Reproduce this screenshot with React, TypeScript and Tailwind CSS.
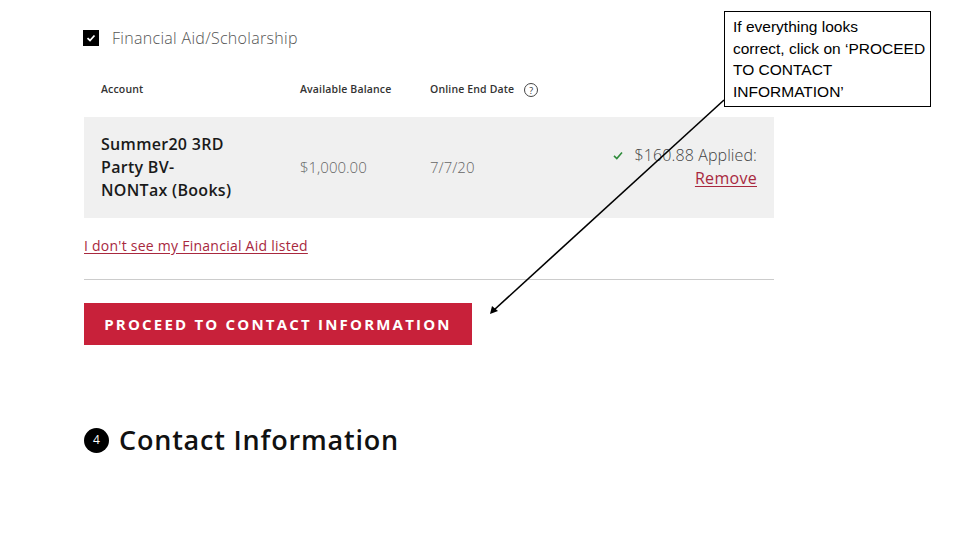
import React from "react";

export default function App() {
  const font = { fontFamily: '"Open Sans", "DejaVu Sans", sans-serif' };
  return (
    <div className="relative w-[960px] h-[540px] bg-white overflow-hidden" style={font}>
      <div className="pl-[83px] pt-[30px] w-[774px]">
        {/* checkbox row */}
        <div className="flex items-center h-[16px] gap-[13px]">
          <div className="w-[16px] h-[16px] bg-black flex items-center justify-center">
            <svg width="10" height="10" viewBox="0 0 10 10">
              <path d="M1.5 5.2 L4 7.5 L8.5 2.5" stroke="white" strokeWidth="1.8" fill="none" />
            </svg>
          </div>
          <span className="text-[16px] text-[#555] font-light tracking-[0.3px]">Financial Aid/Scholarship</span>
        </div>

        {/* header row */}
        <div className="flex items-center h-[20px] mt-[34px] pl-[18px] text-[10.5px] font-semibold text-[#333] tracking-[0.15px]">
          <div className="w-[199px]">Account</div>
          <div className="w-[130px]">Available Balance</div>
          <div className="flex items-center gap-[10px]">
            <span>Online End Date</span>
            <span className="w-[14px] h-[14px] rounded-full border border-[#444] flex items-center justify-center text-[9px] font-normal leading-none">?</span>
          </div>
        </div>

        {/* gray row */}
        <div className="flex items-center h-[101px] mt-[17px] ml-[1px] pl-[17px] pr-[17px] bg-[#f0f0f0]">
          <div className="w-[199px] text-[16px] font-semibold text-[#1a1a1a] leading-[23px] tracking-[0.3px]">
            Summer20 3RD
            <br />
            Party BV-
            <br />
            NONTax (Books)
          </div>
          <div className="w-[130px] text-[15px] font-light text-[#666]">$1,000.00</div>
          <div className="w-[100px] text-[15px] font-light text-[#666]">7/7/20</div>
          <div className="flex-1 flex flex-col items-end text-[16px] font-light leading-[23px] -mt-[1px] tracking-[0.1px]">
            <div className="flex items-center gap-[12px] text-[#444]">
              <svg width="10" height="9" viewBox="0 0 10 9">
                <path d="M1 4.8 L3.8 7.5 L9 1.5" stroke="#2e8b3a" strokeWidth="1.6" fill="none" />
              </svg>
              <span>$160.88 Applied:</span>
            </div>
            <a className="text-[#a8283e] font-normal underline underline-offset-2 tracking-[0.3px]">Remove</a>
          </div>
        </div>

        {/* link */}
        <div className="h-[20px] mt-[17px] ml-[1px] flex items-center">
          <a className="text-[14px] text-[#a8283e] underline underline-offset-2 tracking-[0.25px]">I don't see my Financial Aid listed</a>
        </div>

        {/* divider */}
        <div className="h-px bg-[#cccccc] mt-[24px] ml-[1px]" />

        {/* button */}
        <button className="mt-[23px] ml-[1px] w-[388px] h-[42px] bg-[#c8213a] text-white text-[15px] font-bold tracking-[2.2px] flex items-center justify-center">
          PROCEED TO CONTACT INFORMATION
        </button>

        {/* heading */}
        <div className="mt-[80px] ml-[1px] h-[30px] flex items-center gap-[10px]">
          <div className="w-[25px] h-[25px] rounded-full bg-black text-white text-[12px] flex items-center justify-center">4</div>
          <div className="text-[27px] font-semibold text-[#111] tracking-[0.8px]">Contact Information</div>
        </div>
      </div>

      {/* callout */}
      <div
        className="absolute left-[724px] top-[11px] w-[207px] h-[96px] border border-black bg-white pl-[8px] pt-[4px] text-[15.5px] leading-[21.5px] text-black whitespace-nowrap"
        style={{ fontFamily: '"Liberation Sans", sans-serif' }}
      >
        If everything looks
        <br />
        correct, click on ‘PROCEED
        <br />
        TO CONTACT
        <br />
        INFORMATION’
      </div>

      {/* arrow */}
      <svg className="absolute left-0 top-0 pointer-events-none" width="960" height="540">
        <line x1="724" y1="100" x2="494" y2="310" stroke="black" strokeWidth="1.6" />
        <polygon points="490,314 492,306 498,311" fill="black" />
      </svg>
    </div>
  );
}
